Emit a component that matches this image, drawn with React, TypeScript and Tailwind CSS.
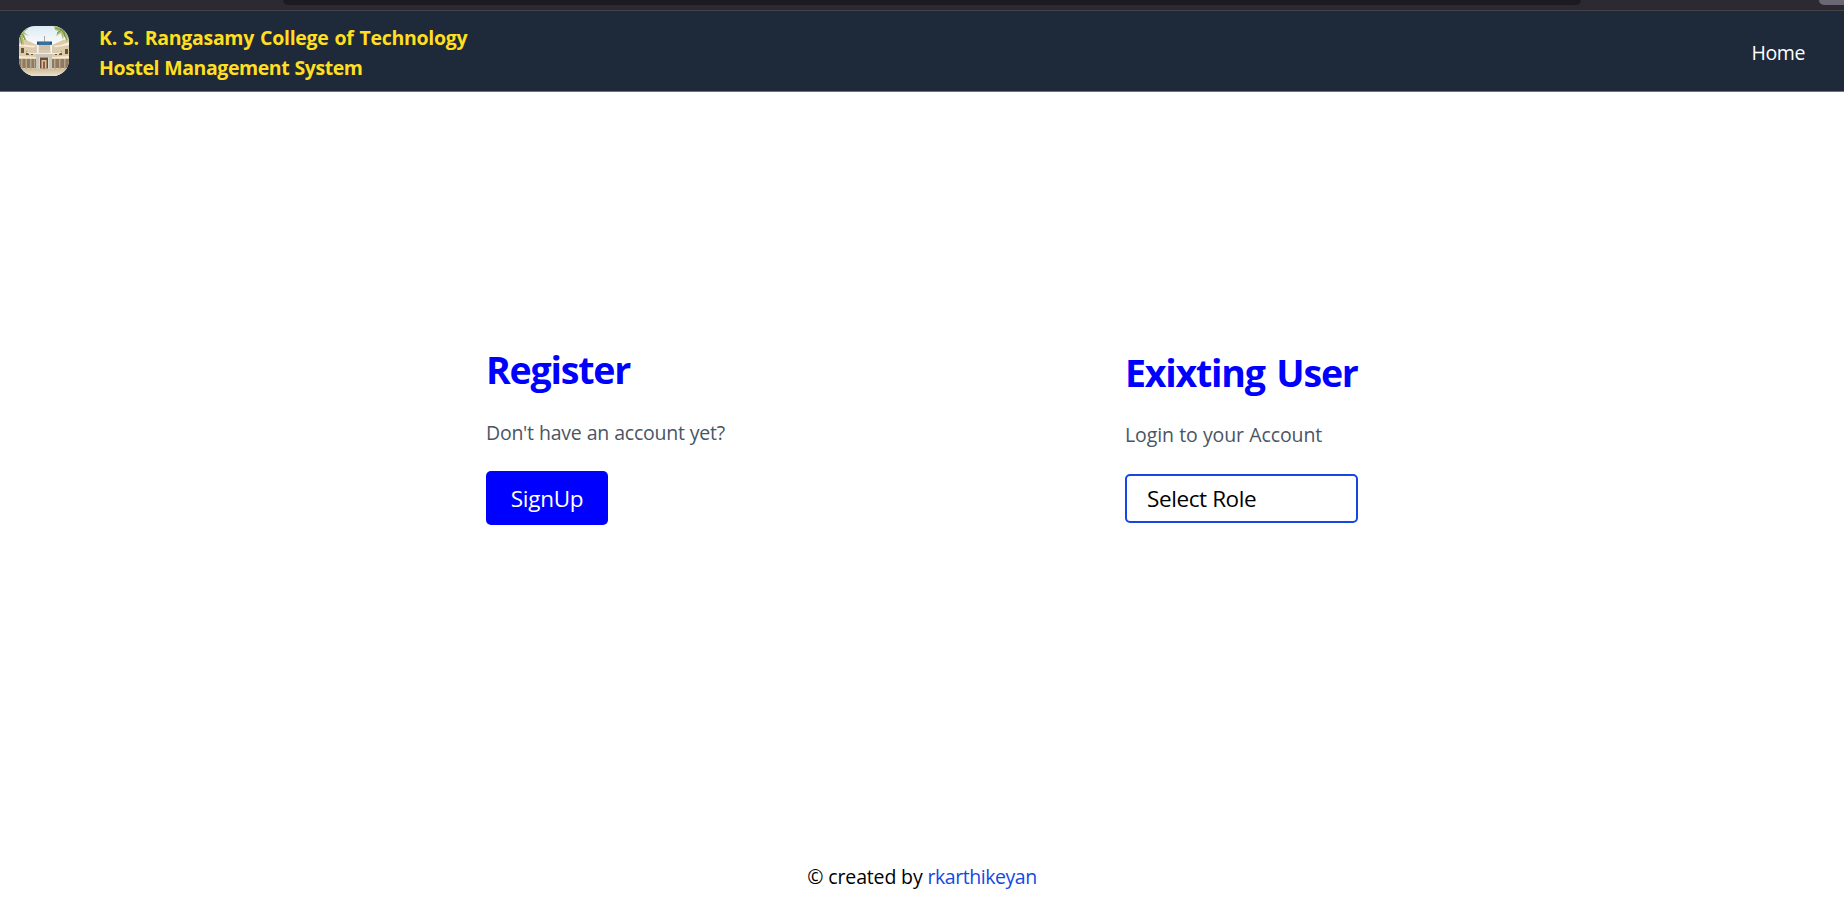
function CollegeImage() {
  return (
    <svg viewBox="0 0 50 50" className="h-[50px] w-[50px] shrink-0 rounded-2xl" role="img" aria-label="College building">
      <defs>
        <linearGradient id="sky" x1="0" y1="0" x2="0" y2="1">
          <stop offset="0" stopColor="#dceaf6" />
          <stop offset="0.4" stopColor="#fdfcf9" />
        </linearGradient>
        <linearGradient id="ground" x1="0" y1="0" x2="0" y2="1">
          <stop offset="0" stopColor="#cdbb9b" />
          <stop offset="1" stopColor="#f1e6d2" />
        </linearGradient>
        <filter id="soft" x="-5%" y="-5%" width="110%" height="110%">
          <feGaussianBlur stdDeviation="0.35" />
        </filter>
      </defs>
      <rect width="50" height="50" fill="url(#sky)" />
      <g filter="url(#soft)">
        <path d="M0 14l5-1 13 6v25H0zM50 13l-6 1-11 5v25h17z" fill="#dccaa8" />
        <path d="M0 17l8 2 10 1v2L0 20zM50 16l-8 3-9 1v2l17-3z" fill="#f7ecd8" />
        <path d="M2 22h3v5H2zM7 25h3v4H7zM12 26h2v3h-2zM36 26h2v3h-2zM40 25h3v4h-3zM46 23h3v5h-3z" fill="#66543c" />
        <path d="M0 30l18 1v1.5L0 32zM33 31l17-1v2l-17 .5z" fill="#f4e9d3" />
        <path d="M0 33h17v9H0zM33 33h17v9H33z" fill="#8d7a61" />
        <path d="M2 33h1.5v10H2zM6.5 33H8v10H6.5zM11 33h1.5v10H11zM15 33h1v10h-1zM35 33h1.5v10H35zM40 33h1.5v10H40zM45 33h1.5v10H45z" fill="#b5a58a" />
        <path d="M17 18h16v10H17z" fill="#e9dfcd" />
        <path d="M20 19h11v6H20z" fill="#d0c2aa" />
        <path d="M7 26l12-7 1 5h11l2-5 10 7-4 2H11z" fill="#d9cbb3" />
        <path d="M7 26l4 1.5h28l4-1.5" fill="none" stroke="#f6eddc" strokeWidth="1" />
        <path d="M18 19h1.5v8H18zM31.5 19H33v8h-1.5z" fill="#fbf6ea" />
        <path d="M18 15.500h15v3.300H18z" fill="#15558f" />
        <path d="M20 17h11" stroke="#8bbcdf" strokeWidth="0.5" />
        <path d="M25.5 10v5.500" stroke="#8b7f76" strokeWidth="0.7" />
        <path d="M17 28h16v15H17z" fill="#c9c6bb" />
        <path d="M20 31h10v12H20z" fill="#ded8cb" />
        <path d="M21 31.500h8v11h-8z" fill="#6f4a36" />
        <path d="M22.5 34h5v8.500h-5z" fill="#d5c1a2" />
        <path d="M24 35.500h2v7h-2z" fill="#8c5b3c" />
        <path d="M-1 43h52v8H-1z" fill="url(#ground)" />
        <path d="M-1 6l5-4 5 1-4 3 5 4-5-2 3 8-4-5 1 9-3-6-3 8zM35 0h16v20l-2-10-1 7-3-9-1 6-2-7-5 3 2-5-3-1z" fill="#aebd76" />
        <path d="M0 7l4 2 2 5M1 10l2 9M36 2l7 2 5 10M40 1l5 4 1 6M45 1l4 7M38 7l5-3" fill="none" stroke="#72863f" strokeWidth="0.8" />
      </g>
    </svg>
  );
}

function BrowserStrip() {
  return (
    <div className="flex h-[11px] shrink-0 border-b border-[#444147] bg-[#2b2932]">
      <div className="ml-[283px] h-[5px] w-[1298px] rounded-b-md bg-[#1c1b21]" />
      <div className="ml-auto h-[5px] w-[25px] rounded-bl-md bg-[#6a6872]" />
    </div>
  );
}

export default function App() {
  return (
    <div className="flex h-[919px] flex-col overflow-hidden bg-white font-['Open_Sans','Noto_Sans',sans-serif] text-[20px] leading-[30px] text-black">
      <BrowserStrip />
      <header className="flex h-[81px] shrink-0 items-center justify-between border-b border-[#6a7282] bg-[#1e2939] pr-[39px] pl-[19px]">
        <div className="flex items-center gap-[30px]">
          <CollegeImage />
          <div className="pt-[3px] font-bold whitespace-nowrap text-[#ffdf20]">
            <p className="text-[19.5px] tracking-[-0.3px] [word-spacing:1.3px]">K. S. Rangasamy College of Technology</p>
            <p className="text-[19.5px] tracking-[-0.43px] [word-spacing:0.6px]">Hostel Management System</p>
          </div>
        </div>
        <a href="#" className="pt-[3px] text-[19.5px] tracking-[-0.4px] text-white">Home</a>
      </header>
      <main className="flex items-start pt-[253px] pl-[486px] whitespace-nowrap">
        <section className="w-[639px]">
          <h1 className="text-[37.5px] leading-[50px] font-bold tracking-[-1.2px] text-[#0000ff]">Register</h1>
          <p className="mt-[23px] text-[19.5px] tracking-[-0.25px] text-[#4a5565] [word-spacing:0.4px]">Don&apos;t have an account yet?</p>
          <button className="mt-[23px] flex h-[54px] w-[122px] items-center justify-center rounded-[5px] bg-[#0000ff] pt-[2px] text-[22.5px] tracking-[-0.3px] text-white">SignUp</button>
        </section>
        <section className="w-[233px] pt-[3px]">
          <h1 className="text-[37.5px] leading-[50px] font-bold tracking-[-1.2px] text-[#0000ff] [word-spacing:3px]">Exixting User</h1>
          <p className="mt-[22px] text-[19.5px] tracking-[-0.1px] text-[#4a5565] [word-spacing:0.3px]">Login to your Account</p>
          <button className="mt-[24px] flex h-[49px] w-[233px] items-center rounded-[5px] border-2 border-[#1447e6] bg-white pl-[20px] text-[22.5px] tracking-[-0.4px]">Select Role</button>
        </section>
      </main>
      <footer className="mt-auto pb-[27px] text-center text-[19.5px] tracking-[-0.15px]">
        © created by <a href="#" className="tracking-[-0.45px] text-[#1447e6]">rkarthikeyan</a>
      </footer>
    </div>
  );
}
